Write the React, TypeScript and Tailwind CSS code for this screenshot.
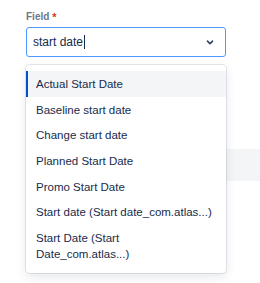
import React from "react";

const items: { label: React.ReactNode; active?: boolean }[] = [
  { label: "Actual Start Date", active: true },
  { label: "Baseline start date" },
  { label: "Change start date" },
  { label: "Planned Start Date" },
  { label: "Promo Start Date" },
  { label: "Start date (Start date_com.atlas...)" },
  {
    label: (
      <>
        Start Date (Start
        <br />
        Date_com.atlas...)
      </>
    ),
  },
];

export default function App() {
  return (
    <div
      className="relative w-[260px] h-[283px] bg-white overflow-hidden"
      style={{ fontFamily: '"Liberation Sans", Arial, sans-serif' }}
    >
      <div className="pl-[26px] pt-[9px]">
        <div className="flex items-start h-[16px] leading-[16px] text-[10px] font-bold text-[#6b778c]">
          <span>Field</span>
          <span className="ml-[3px] mt-[1px] text-[#de350b] text-[11px] leading-[14px]">*</span>
        </div>
        <div className="mt-[2px] w-[200px] h-[30px] rounded-[3px] border border-[#4c9aff] bg-white flex items-center pl-[6px] pr-[5px]">
          <div className="flex-1 flex items-center text-[12px] text-[#172b4d]">
            <span>start date</span>
            <span className="ml-[0.5px] w-px h-[14px] bg-[#172b4d]" />
          </div>
          <svg width="20" height="20" viewBox="0 0 24 24" className="text-[#344563]">
            <path
              fill="currentColor"
              d="M8.292 10.293a1.009 1.009 0 0 0 0 1.419l2.939 2.965c.218.215.5.322.779.322s.556-.107.769-.322l2.93-2.955a1.01 1.01 0 0 0 0-1.419.987.987 0 0 0-1.406 0l-2.298 2.317-2.307-2.327a.99.99 0 0 0-1.406 0z"
            />
          </svg>
        </div>
      </div>
      <div className="mt-[92px] ml-[120px] h-[32px] bg-[#f4f5f7]" />

      <div className="absolute left-[26px] top-[65px] w-[200px] rounded-[4px] bg-white py-[6px] shadow-[0_0_0_1px_rgba(9,30,66,0.1),0_4px_11px_rgba(9,30,66,0.1)]">
        {items.map((it, i) => (
          <div
            key={i}
            className={
              "pl-[10px] pr-[10px] py-[4.85px] text-[11.5px] leading-[16px] text-[#172b4d] whitespace-nowrap " +
              (it.active
                ? "bg-[#f4f5f7] shadow-[inset_2px_0_0_#0052cc]"
                : "")
            }
          >
            {it.label}
          </div>
        ))}
      </div>
    </div>
  );
}
